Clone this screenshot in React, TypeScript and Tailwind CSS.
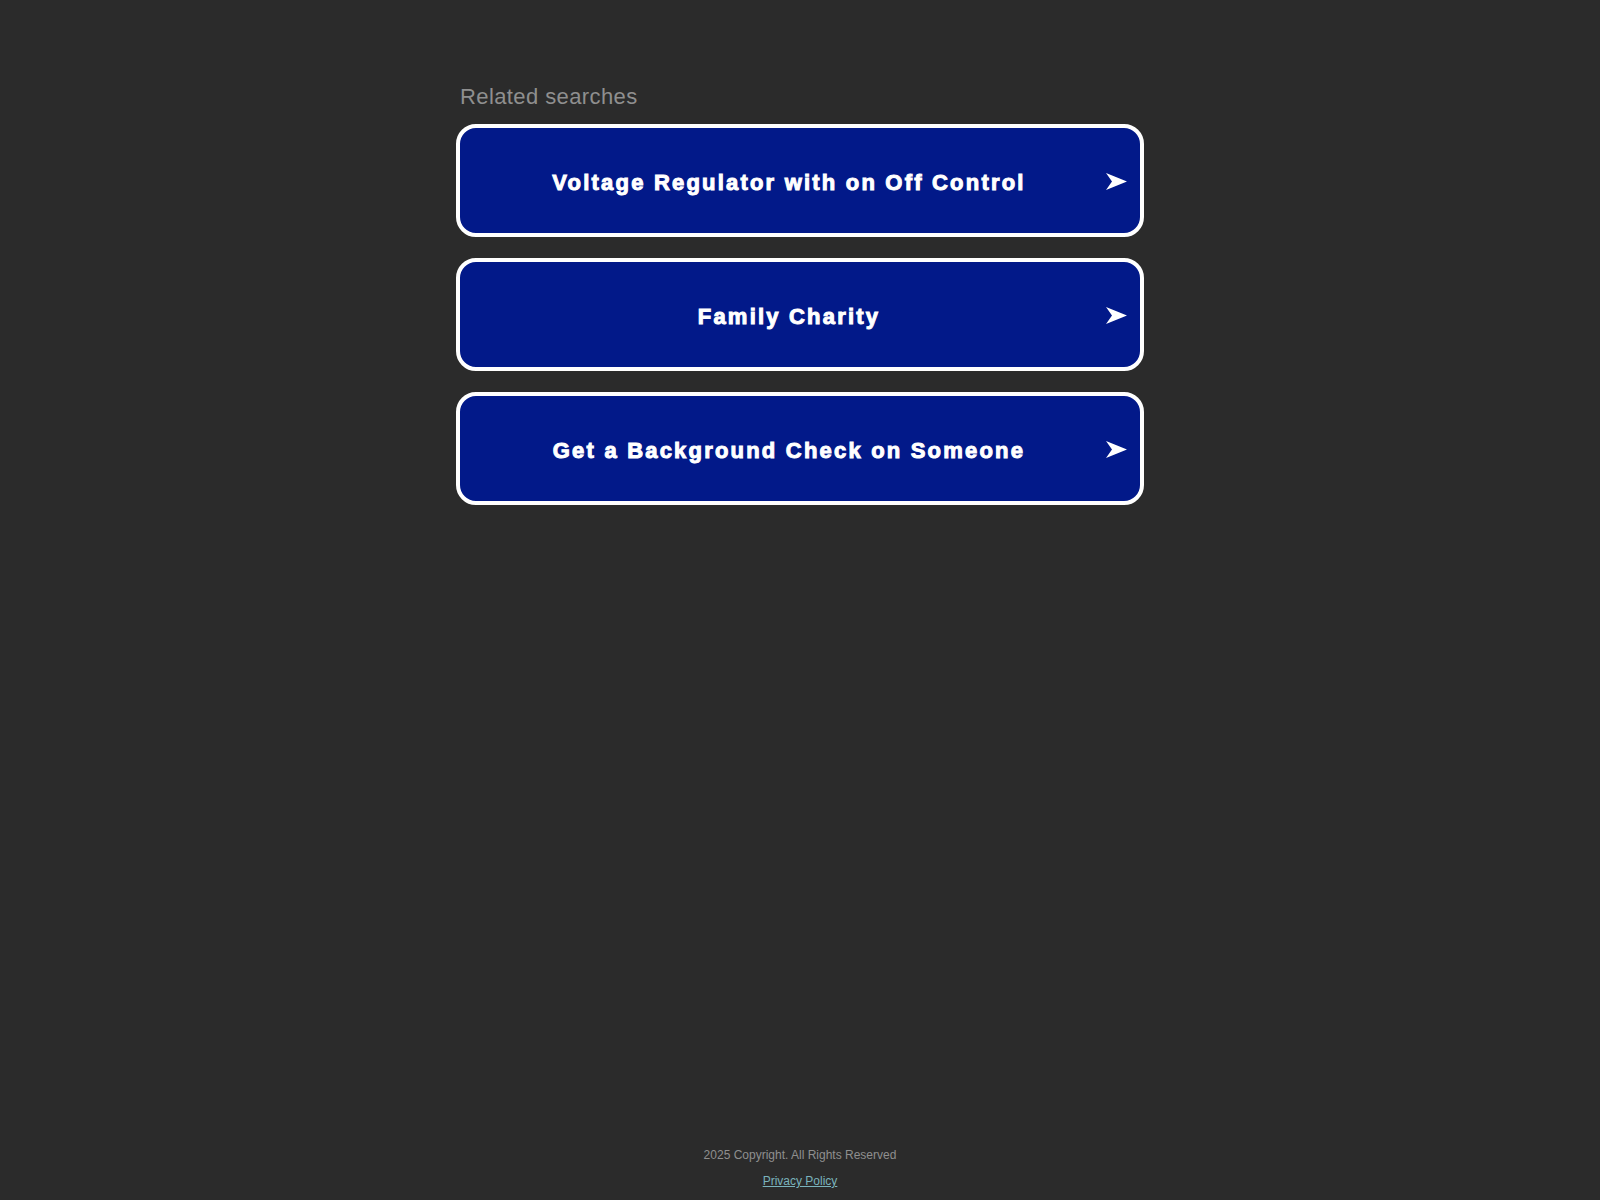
import React from 'react'

const searches = [
  'Voltage Regulator with on Off Control',
  'Family Charity',
  'Get a Background Check on Someone',
]

function Arrow() {
  return (
    <svg width="21" height="17" viewBox="0 0 21 17" className="shrink-0 mt-[1px]">
      <polygon points="0,0 21,8.5 0,17 6,8.5" fill="#ffffff" />
    </svg>
  )
}

export default function App() {
  return (
    <div className="min-h-screen bg-[#2b2b2b] flex flex-col" style={{ fontFamily: '"Liberation Sans", Arial, sans-serif' }}>
      <div className="w-[688px] mx-auto pt-[84px]">
        <div className="text-[22px] leading-[26px] tracking-[0.4px] text-[#8f8f8f] pl-[4px] mb-[14px]">Related searches</div>
        <div className="flex flex-col gap-[21px]">
          {searches.map((s) => (
            <a
              key={s}
              href="#"
              className="h-[113px] rounded-[20px] border-4 border-white bg-[#021989] flex items-center pl-[12px] pr-[13px]"
            >
              <span className="flex-1 pt-[3px] text-center text-white font-bold text-[22px] tracking-[2.2px] [-webkit-text-stroke:1px_white]">
                {s}
              </span>
              <Arrow />
            </a>
          ))}
        </div>
      </div>
      <div className="mt-auto pb-[11px] flex flex-col items-center gap-[10px] text-[12px] leading-[16px]">
        <div className="text-[#8f8f8f]">2025 Copyright. All Rights Reserved</div>
        <a href="#" className="text-[#7ab3bd] underline">Privacy Policy</a>
      </div>
    </div>
  )
}
